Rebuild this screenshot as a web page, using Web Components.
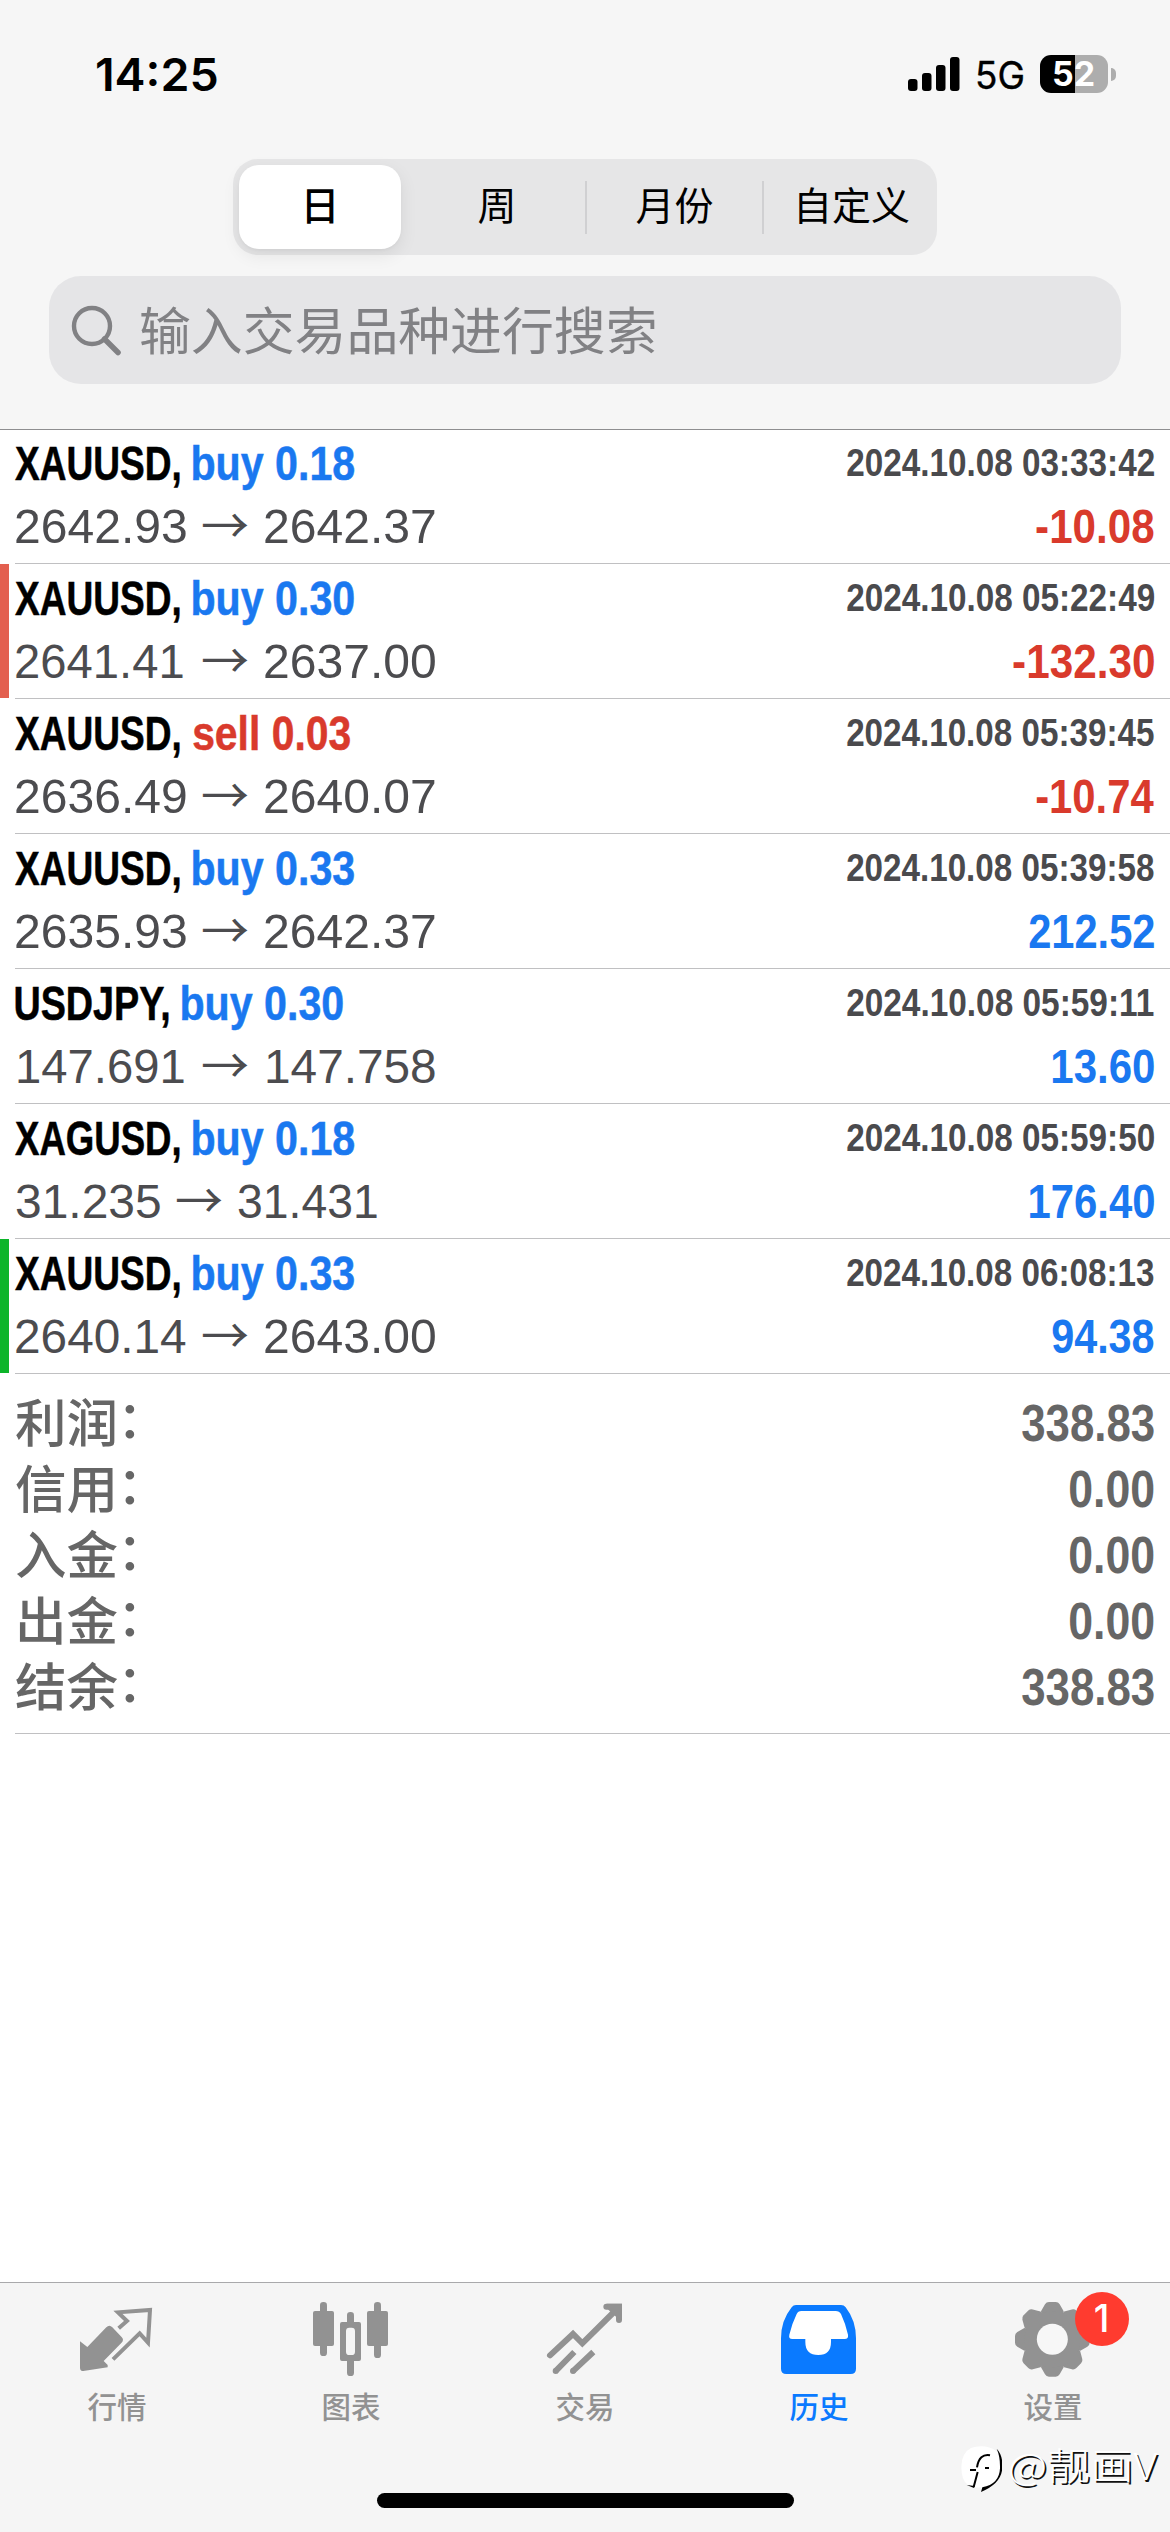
<!DOCTYPE html>
<html lang="zh-CN">
<head>
<meta charset="utf-8">
<title>历史</title>
<style>
html, body { margin: 0; padding: 0; background: #fff; }
body { width: 1170px; height: 2532px; overflow: hidden; font-family: "Liberation Sans", "Noto Sans CJK SC", sans-serif; }
</style>
</head>
<body>
<history-app></history-app>
<script>
const SANS = '"Liberation Sans", "Noto Sans CJK SC", sans-serif';
const CJK = '"Noto Sans CJK SC", "Liberation Sans", sans-serif';

const mount = (el, html) => {
  const t = document.createElement('template');
  t.innerHTML = html;
  el.attachShadow({ mode: 'open' }).append(t.content.cloneNode(true));
};

/* Condensed text run: the drawn glyphs are scaled to fill exactly `w` pixels. */
class FitText extends HTMLElement {
  connectedCallback() {
    if (this.shadowRoot) return;
    mount(this, `<style>
      :host { display: inline-block; white-space: pre; }
      span { display: inline-block; transform-origin: 0 50%; white-space: pre; }
    </style><span><slot></slot></span>`);
    const w = +this.getAttribute('w');
    this.style.width = w + 'px';
    const cs = getComputedStyle(this);
    const c = document.createElement('canvas').getContext('2d');
    c.font = `${cs.fontWeight} ${cs.fontSize} ${cs.fontFamily}`;
    const m = c.measureText(this.textContent);
    const k = w / (m.actualBoundingBoxRight + m.actualBoundingBoxLeft);
    this.shadowRoot.querySelector('span').style.transform = `translateX(${m.actualBoundingBoxLeft * k}px) scaleX(${k})`;
  }
}
customElements.define('fit-text', FitText);

class StatusBar extends HTMLElement {
  connectedCallback() {
    mount(this, `<style>
      :host { display: flex; justify-content: space-between; height: 120px; padding: 30px 54px 0 97px; box-sizing: border-box; color: #000; }
      .time { font: 600 45.500px/89px Inter, sans-serif; }
      .right { display: flex; align-items: flex-start; }
      .net { font: 400 37.500px/91px Inter, sans-serif; margin-left: 17px; -webkit-text-stroke: .4px #000; }
      svg.sig { margin-top: 27px; }
      .bat { display: flex; align-items: center; margin: 25px 0 0 17px; }
      .box { width: 68px; height: 38px; border-radius: 11px; background: linear-gradient(90deg, #000 0 35px, #adadad 35px); color: #fff; text-align: center; font: 700 33.500px/38px Inter, sans-serif; }
      .nub { margin-left: 3px; width: 5px; height: 13px; border-radius: 0 6px 6px 0; background: #adadad; }
    </style>
    <fit-text class="time" w="120">14:25</fit-text>
    <div class="right">
      <svg class="sig" width="52" height="34" viewBox="0 0 52 34"><rect y="22" width="9.5" height="12" rx="3"/><rect x="14" y="16" width="9.5" height="18" rx="3"/><rect x="28" y="8" width="9.5" height="26" rx="3"/><rect x="42" y="0" width="9.5" height="34" rx="3"/></svg>
      <fit-text class="net" w="46">5G</fit-text>
      <div class="bat"><div class="box"><fit-text w="40">52</fit-text></div><div class="nub"></div></div>
    </div>`);
  }
}
customElements.define('status-bar', StatusBar);

class SegmentItem extends HTMLElement {
  connectedCallback() {
    mount(this, `<style>
      :host { display: flex; align-items: center; justify-content: center; box-sizing: border-box; height: 84px; flex: 1; font: 400 39px/86px ${SANS}; color: #000; border-radius: 20px; }
      :host([selected]) { background: #fff; font-weight: 500; flex: 0 0 162px; box-shadow: 0 6px 18px rgba(0,0,0,.08), 0 2px 3px rgba(0,0,0,.03); }
    </style><slot></slot>`);
  }
}
customElements.define('segment-item', SegmentItem);

class SegmentedControl extends HTMLElement {
  connectedCallback() {
    mount(this, `<style>
      :host { display: flex; align-items: center; width: 704px; height: 96px; box-sizing: border-box; margin: 39px auto 0; padding: 0 0 0 6px; border-radius: 25px; background: #e6e6e7; }
      i { width: 2px; height: 53px; background: #d0d0d2; flex: none; }
      .g { width: 8px; flex: none; }
      .a { flex: 0 0 176px; } .b { flex: 0 0 175px; } .c { flex: 0 0 175px; }
    </style>
    <segment-item selected>日</segment-item><span class="g"></span>
    <segment-item class="a">周</segment-item><i></i>
    <segment-item class="b">月份</segment-item><i></i>
    <segment-item class="c">自定义</segment-item>`);
  }
}
customElements.define('segmented-control', SegmentedControl);

class SearchField extends HTMLElement {
  connectedCallback() {
    mount(this, `<style>
      :host { display: flex; align-items: center; width: 1072px; height: 108px; box-sizing: border-box; margin: 21px auto 0; padding: 0 22px; border-radius: 32px; background: #e5e5e7; color: #818184; font: 400 51.5px/108px ${SANS}; }
      svg { margin-right: 19px; flex: none; }
      fit-text { padding-top: 3px; }
    </style>
    <svg width="51" height="51" viewBox="0 0 51 51" fill="none" stroke="currentColor" stroke-width="4.4"><circle cx="21" cy="21" r="18"/><path d="M33.5 34 47 47.500" stroke-width="5.500" stroke-linecap="round"/></svg>
    <fit-text w="514">输入交易品种进行搜索</fit-text>`);
  }
}
customElements.define('search-field', SearchField);

class DealRow extends HTMLElement {
  connectedCallback() {
    const a = (n, d) => this.getAttribute(n) || d;
    const blue = '#1a78f0', red = '#d93a2c';
    mount(this, `<style>
      :host { display: flex; height: 135px; box-sizing: border-box; }
      .mark { width: 9px; height: 134px; margin: 0 6px 0 0; flex: none; background: ${a('mark', 'transparent')}; }
      .main { flex: 1; display: flex; flex-direction: column; padding-top: 3px; border-bottom: 1px solid #c0c0c2; box-sizing: border-box; }
      .line { display: flex; justify-content: space-between; height: 63px; line-height: 63px; padding: 0 16px 0 1px; white-space: pre; }
      .line > div { display: flex; }
      .t { font-weight: 700; font-size: 47.500px; -webkit-text-stroke: .5px currentColor; }
      .name { margin-left: -1px; }
      .side { margin-left: 13px; color: ${a('side').startsWith('buy') ? blue : red}; }
      .date { font-weight: 700; font-size: 38.500px; line-height: 61px; color: #4a4a4d; }
      .price { font-size: 48px; color: #4c4c4f; }
      .price fit-text:first-child { margin-left: ${a('ax', 0)}px; }
      .arrow { font: 400 48px/55px "Noto Sans CJK SC", sans-serif; width: 48px; margin: 0 ${a('ar', 16)}px 0 ${a('al', 15)}px; display: flex; justify-content: center; }
      .profit { font-weight: 700; font-size: 48px; color: ${a('profit')[0] === '-' ? red : blue}; }
    </style>
    <div class="mark"></div>
    <div class="main">
      <div class="line"><div><fit-text class="t name" w="${a('nw', 165)}">${a('symbol')},</fit-text><fit-text class="t side" w="${a('sw', 161)}">${a('side')}</fit-text></div><fit-text class="date" w="307">${a('date')}</fit-text></div>
      <div class="line"><div class="price"><fit-text w="${a('aw', 170)}">${a('open')}</fit-text><span class="arrow">→</span><fit-text w="${a('bw', 170)}">${a('close')}</fit-text></div><fit-text class="profit" w="${a('pw')}">${a('profit')}</fit-text></div>
    </div>`);
  }
}
customElements.define('deal-row', DealRow);

class SummaryRow extends HTMLElement {
  connectedCallback() {
    mount(this, `<style>
      :host { display: flex; justify-content: space-between; height: 66px; line-height: 66px; color: #666; padding: 0 16px 0 0; }
      .l { display: flex; font: 500 51.500px/66px ${SANS}; }
      .c { line-height: 58px; margin-left: -1px; }
      .v { font-weight: 700; font-size: 51px; }
    </style><div class="l"><span><slot></slot></span><span class="c">：</span></div><fit-text class="v" w="${this.getAttribute('w')}">${this.getAttribute('value')}</fit-text>`);
  }
}
customElements.define('summary-row', SummaryRow);

class TabItem extends HTMLElement {
  connectedCallback() {
    mount(this, `<style>
      :host { display: flex; flex-direction: column; align-items: center; width: 234px; color: #929292; font: 500 29.500px/36px ${SANS}; }
      :host([active]) { color: #0a7aff; }
      ::slotted(svg) { display: block; }
    </style><slot></slot><span>${this.getAttribute('label')}</span>`);
  }
}
customElements.define('tab-item', TabItem);

class TabBar extends HTMLElement {
  connectedCallback() {
    const teeth = [0, 45, 90, 135, 180, 225, 270, 315].map(d => `<path d="M-34-84 -22-105Q-18-112-10-112H10Q18-112 22-105L34-84 30-50H-30Z" transform="rotate(${d})"/>`).join('');
    mount(this, `<style>
      :host { display: flex; flex-direction: column; align-items: center; height: 250px; box-sizing: border-box; border-top: 1px solid #a9a9ab; background: #f5f5f5; }
      nav { display: flex; height: 210px; }
      .home { width: 417px; height: 15px; border-radius: 8px; background: #000; }
    </style>
    <nav>
      <tab-item label="行情"><svg width="234" height="107" viewBox="0 39 702 321"><path fill="currentColor" d="M240 214 262 231 319 172Q328 163 337 172L364 200Q374 209 364 219L311 273 323 285V292L250 303Q240 303 240 293Z"/><path fill="none" stroke="currentColor" stroke-width="12" d="M356 175 381 153 354 127 450 120 444 218 419 190 339 268"/></svg></tab-item>
      <tab-item label="图表"><svg width="234" height="107" viewBox="702 39 702 321" fill="currentColor"><rect x="960" y="96" width="21" height="162" rx="10"/><rect x="939" y="123" width="63" height="105" rx="6"/><rect x="1122" y="96" width="21" height="168" rx="10"/><rect x="1101" y="123" width="63" height="105" rx="6"/><rect x="1041" y="126" width="21" height="40" rx="10"/><rect x="1041" y="262" width="21" height="56" rx="10"/><path fill-rule="evenodd" d="M1026 156h51q6 0 6 6v105q0 6-6 6h-51q-6 0-6-6v-105q0-6 6-6ZM1048 173q-10 0-10 10v62q0 10 10 10h7q10 0 10-10v-62q0-10-10-10Z"/></svg></tab-item>
      <tab-item label="交易"><svg width="234" height="107" viewBox="24 39 702 321" fill="none" stroke="currentColor" stroke-width="18"><path stroke-linecap="round" d="M270 256 339 192 367 220 474 114M439 110H477V150"/><path fill="currentColor" stroke="none" d="M440 101H486V150L468 140 445 119Z"/><circle cx="287" cy="303" r="9" fill="currentColor" stroke="none"/><circle cx="339" cy="303" r="9" fill="currentColor" stroke="none"/><path d="M286 304 343 246M338 304 400 246"/></svg></tab-item>
      <tab-item label="历史" active><svg width="234" height="107" viewBox="726 39 702 321"><path fill="currentColor" d="M1008 105H1143Q1152 105 1157 112 1188 152 1188 205V296Q1188 312 1172 312H979Q963 312 963 296V205Q963 152 995 112 1000 105 1008 105Z"/><path fill="#fff" d="M1024 123H1127Q1138 123 1143 132 1157 162 1164 194 1166 207 1154 207H1113V216Q1113 255 1075 255 1036 255 1036 216V207H997Q985 207 988 194 995 163 1010 132 1014 123 1024 123Z"/></svg></tab-item>
      <tab-item label="设置"><svg width="234" height="107" viewBox="108 39 702 321"><g transform="translate(457 208)" fill="currentColor">${teeth}<circle r="84"/></g><circle cx="457" cy="208" r="46.500" fill="#f7f7f7"/><circle cx="606" cy="147" r="81" fill="#ff3b2f"/><text x="605" y="186" text-anchor="middle" font-family="Inter" font-size="113" fill="#fff">1</text></svg></tab-item>
    </nav>
    <div class="home"></div>`);
  }
}
customElements.define('tab-bar', TabBar);

class WaterMark extends HTMLElement {
  connectedCallback() {
    mount(this, `<style>
      :host { position: absolute; left: 960px; top: 2442px; display: flex; align-items: center; height: 50px; color: #fff; font: 300 37px/50px ${CJK}; text-shadow: 1.500px 1.500px 0 #111; }
      svg { margin-right: 8px; }
      fit-text { margin-top: -7px; }
    </style>
    <svg width="42" height="50" viewBox="180 516 126 150"><path d="M213 534Q240 524 270 533 306 543 306 592 306 640 245 666L243 652Q215 655 203 644 184 630 184 590 185 548 213 534Z" fill="#fff"/><path d="M290 536Q309 556 307 592 306 640 243 666L247 652Q298 643 300 595 301 560 290 536Z"/><path d="M270 556Q238 550 231 592M210 600H228M233 606 221 651M255 594H267" fill="none" stroke="#000" stroke-width="6"/><path d="M200 645 222 654 224 648Z"/></svg>
    <fit-text w="148">@靓画V</fit-text>`);
  }
}
customElements.define('water-mark', WaterMark);

class HistoryApp extends HTMLElement {
  connectedCallback() {
    mount(this, `<style>
      :host { display: flex; flex-direction: column; width: 1170px; height: 2532px; position: relative; background: #fff; font-family: ${SANS}; }
      header { height: 430px; box-sizing: border-box; background: #f6f6f6; border-bottom: 1px solid #8e8e90; flex: none; }
      main { flex: 1; margin-top: -1px; }
      .sum { margin-left: 15px; height: 360px; box-sizing: border-box; padding-top: 17px; border-bottom: 1px solid #c0c0c2; }
    </style>
    <header><status-bar></status-bar><segmented-control></segmented-control><search-field></search-field></header>
    <main>
      <deal-row symbol="XAUUSD" side="buy 0.18" date="2024.10.08 03:33:42" open="2642.93" close="2642.37" profit="-10.08" pw="118"></deal-row>
      <deal-row mark="#e35f4f" symbol="XAUUSD" side="buy 0.30" date="2024.10.08 05:22:49" open="2641.41" aw="167" al="18" close="2637.00" profit="-132.30" pw="141"></deal-row>
      <deal-row symbol="XAUUSD" side="sell 0.03" sw="157" date="2024.10.08 05:39:45" open="2636.49" close="2640.07" profit="-10.74" pw="118"></deal-row>
      <deal-row symbol="XAUUSD" side="buy 0.33" date="2024.10.08 05:39:58" open="2635.93" close="2642.37" profit="212.52" pw="125"></deal-row>
      <deal-row symbol="USDJPY" nw="154" side="buy 0.30" date="2024.10.08 05:59:11" open="147.691" ax="2" aw="166" al="17" close="147.758" ar="18" bw="168" profit="13.60" pw="101"></deal-row>
      <deal-row symbol="XAGUSD" side="buy 0.18" date="2024.10.08 05:59:50" open="31.235" aw="144" close="31.431" ar="15" bw="139" profit="176.40" pw="124"></deal-row>
      <deal-row mark="#0db52a" symbol="XAUUSD" side="buy 0.33" date="2024.10.08 06:08:13" open="2640.14" close="2643.00" profit="94.38" pw="102"></deal-row>
      <section class="sum">
        <summary-row value="338.83" w="132">利润</summary-row>
        <summary-row value="0.00" w="84">信用</summary-row>
        <summary-row value="0.00" w="84">入金</summary-row>
        <summary-row value="0.00" w="84">出金</summary-row>
        <summary-row value="338.83" w="132">结余</summary-row>
      </section>
    </main>
    <tab-bar></tab-bar>
    <water-mark></water-mark>`);
  }
}
customElements.define('history-app', HistoryApp);
</script>
</body>
</html>
